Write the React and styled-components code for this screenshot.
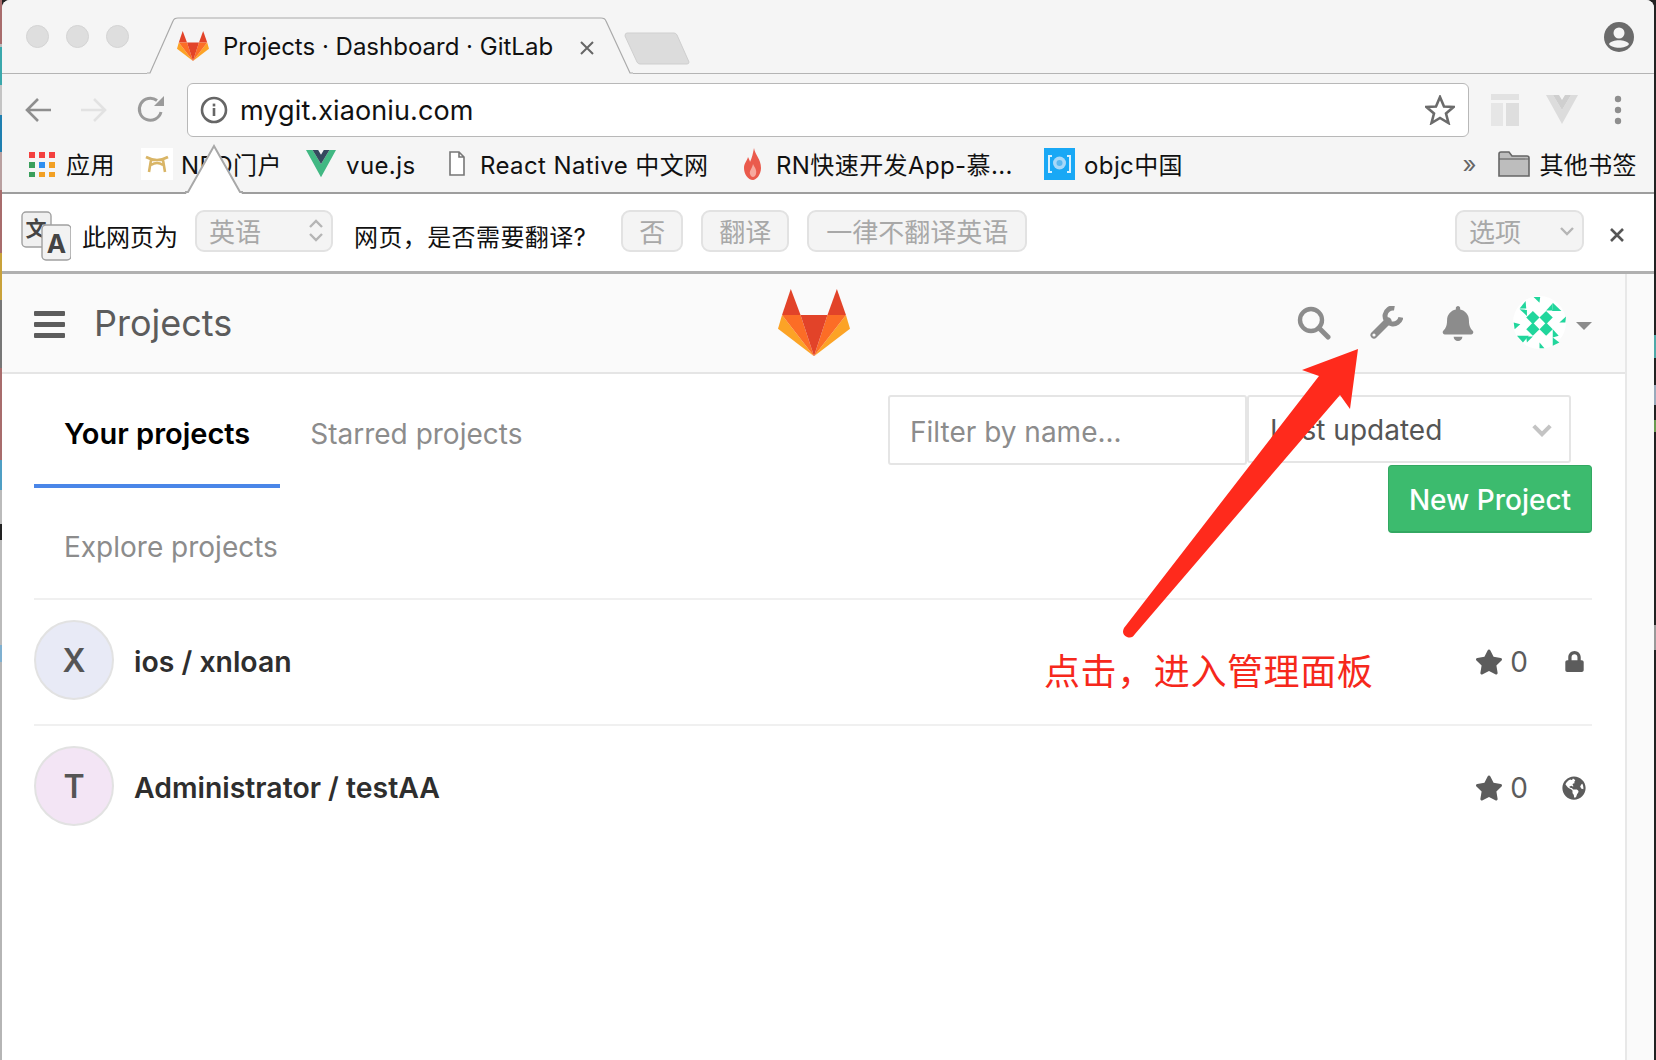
import React from "react";
import styled, { createGlobalStyle } from "styled-components";
import { FaStar, FaLock, FaGlobeAmericas, FaBell } from "react-icons/fa";

const GlobalStyle = createGlobalStyle`
  html, body {
    margin: 0;
    padding: 0;
    background: #fff;
  }
  * {
    box-sizing: border-box;
  }
`;

const FONT = `Inter, "Noto Sans CJK SC", sans-serif`;

const Page = styled.div`
  position: relative;
  display: flex;
  width: 1656px;
  height: 1060px;
  overflow: hidden;
  font-family: ${FONT};
  background: #222;
`;

const LeftEdge = styled.div`
  width: 2px;
  flex: none;
  background: linear-gradient(
    to bottom,
    #a86c6c 0 44px, #bbb 44px 47px, #3aa8ac 47px 85px, #c4c4c4 85px 115px,
    #1f7fb0 115px 152px, #b9a0a0 152px 190px, #a86c6c 190px 253px, #c9a23a 253px 300px,
    #777 300px 368px, #a86c6c 368px 460px, #4f9fc4 460px 490px, #bbb 490px 524px,
    #222 524px 540px, #bbb 540px 645px, #7fb0d0 645px 662px, #b5b5b5 662px
  );
`;

const RightEdge = styled.div`
  width: 2px;
  flex: none;
  background: linear-gradient(
    to bottom,
    #222 0 335px, #4fa8a8 335px 358px, #222 358px 385px, #9ab 385px 405px,
    #222 405px 420px, #6a9a50 420px 432px, #222 432px 625px, #999 625px 650px, #222 650px
  );
`;

const Window = styled.div`
  width: 1652px;
  flex: none;
  display: flex;
  flex-direction: column;
  background: #fff;
  border-radius: 8px 8px 0 0;
  overflow: hidden;
`;

const TabStrip = styled.div`
  display: flex;
  height: 74px;
  flex: none;
  padding-left: 24px;
  background: #f5f5f5;
  border-bottom: 1px solid #b4b4b4;
`;

const Lights = styled.div`
  display: flex;
  gap: 17px;
  padding-top: 25px;
  width: 121px;
`;

const Light = styled.span`
  width: 23px;
  height: 23px;
  border-radius: 50%;
  background: #dedede;
  border: 1px solid #d4d4d4;
`;

const Tab = styled.div`
  position: relative;
  display: flex;
  align-items: center;
  width: 486px;
  height: 57px;
  margin-top: 17px;
  padding: 1px 0 0 30px;
  gap: 14px;
`;

const TabShape = styled.svg`
  position: absolute;
  inset: 0;
`;

const TabTitle = styled.span`
  position: relative;
  font-size: 24px;
  color: #111;
  white-space: nowrap;
  width: 344px;
`;

const TabClose = styled.svg`
  position: relative;
  margin-left: -2px;
  margin-top: 3px;
`;

const NewTab = styled.svg`
  margin: 32px 0 0 -9px;
`;

const AccountIcon = styled.svg`
  margin: 21px 19px 0 auto;
`;

const Toolbar = styled.div`
  display: flex;
  align-items: center;
  height: 64px;
  flex: none;
  padding: 8px 0 0 23px;
  background: #f5f5f5;
`;

const NavIcon = styled.svg`
  flex: none;
  margin-right: ${(p) => p.$mr || 0}px;
`;

const Omnibox = styled.div`
  display: flex;
  align-items: center;
  width: 1282px;
  height: 54px;
  margin-right: 22px;
  padding: 0 13px 0 12px;
  gap: 12px;
  background: #fff;
  border: 1px solid #b8b8b8;
  border-radius: 6px;
  flex: none;
`;

const Url = styled.span`
  flex: 1;
  font-size: 27px;
  color: #111;
  letter-spacing: 0.1px;
`;

const Bookmarks = styled.div`
  position: relative;
  display: flex;
  align-items: center;
  height: 56px;
  flex: none;
  padding: 0 17px 2px 26px;
  background: #f5f5f5;
  border-bottom: 2px solid #9e9e9e;
`;

const Bookmark = styled.div`
  display: flex;
  align-items: center;
  gap: ${(p) => p.$gap || 10}px;
  width: ${(p) => (p.$w ? `${p.$w}px` : "auto")};
  flex: none;
  font-size: 24px;
  line-height: 34px;
  letter-spacing: 0.4px;
  color: #111;
  white-space: nowrap;
`;

const BookmarkLabel = styled.span`
  padding-top: 3px;
`;

const Chevrons = styled.span`
  margin-left: auto;
  margin-right: 22px;
  font-size: 24px;
  color: #666;
`;

const Notch = styled.svg`
  position: absolute;
  left: 183px;
  bottom: -2px;
`;

const InfoBar = styled.div`
  display: flex;
  align-items: center;
  height: 80px;
  flex: none;
  padding: 0 29px 4px 19px;
  background: #fff;
  border-bottom: 3px solid #b0b0b0;
`;

const InfoText = styled.span`
  font-size: 24px;
  letter-spacing: ${(p) => p.$ls || 0}px;
  color: #111;
  white-space: nowrap;
  margin: ${(p) => p.$m};
  padding-top: 10px;
`;

const Disabled = styled.div`
  display: flex;
  align-items: center;
  justify-content: ${(p) => (p.$between ? "space-between" : "center")};
  width: ${(p) => p.$w}px;
  height: 42px;
  margin: ${(p) => p.$m || 0};
  padding: ${(p) => (p.$between ? "0 7px 0 12px" : 0)};
  font-size: 26px;
  color: #a8a8a8;
  background: #f4f4f4;
  border: 2px solid #e2e2e2;
  border-radius: 9px;
  flex: none;
`;

const Content = styled.div`
  display: flex;
  flex: 1;
  min-height: 0;
`;

const Main = styled.div`
  width: 1623px;
  flex: none;
`;

const Gutter = styled.div`
  flex: 1;
  background: #fafafa;
  border-left: 2px solid #e8e8e8;
`;

const Header = styled.header`
  display: grid;
  grid-template-columns: 1fr auto 1fr;
  align-items: center;
  height: 100px;
  padding: 0 33px 0 32px;
  background: #fafafa;
  border-bottom: 2px solid #e5e5e5;
`;

const HeaderLeft = styled.div`
  display: flex;
  align-items: center;
  gap: 29px;
`;

const LogoSlot = styled.div`
  margin-left: 2px;
`;

const Burger = styled.div`
  display: flex;
  flex-direction: column;
  gap: 6px;
  width: 31px;
  margin-top: 2px;
  span {
    height: 5px;
    border-radius: 1px;
    background: #5c5c5c;
  }
`;

const HeaderTitle = styled.h1`
  margin: 0;
  font-size: 36px;
  font-weight: 400;
  color: #5c5c5c;
`;

const HeaderRight = styled.div`
  display: flex;
  align-items: center;
  justify-content: flex-end;
  color: #8c8c8c;
`;

const HeaderIcon = styled.div`
  display: flex;
  justify-content: center;
  width: 34px;
  margin-right: ${(p) => p.$mr}px;
`;

const IdenticonSlot = styled.div`
  margin-top: -2px;
`;

const Caret = styled.span`
  width: 0;
  height: 0;
  margin: 6px 0 0 10px;
  border-left: 8px solid transparent;
  border-right: 8px solid transparent;
  border-top: 8px solid #8c8c8c;
`;

const TopBar = styled.div`
  display: flex;
  justify-content: space-between;
  height: 226px;
  margin: 0 33px 0 32px;
  border-bottom: 2px solid #f0f0f0;
`;

const TabLinks = styled.div`
  display: flex;
  flex-wrap: wrap;
  align-content: flex-start;
  width: 520px;
`;

const TabLink = styled.div`
  height: ${(p) => p.$h}px;
  padding: ${(p) => p.$pt}px 30px 0;
  font-size: ${(p) => (p.$active ? 29 : 28)}px;
  line-height: 34px;
  font-weight: ${(p) => (p.$active ? 600 : 400)};
  color: ${(p) => (p.$active ? "#000" : "#8c8c8c")};
  border-bottom: ${(p) => (p.$active ? "4px solid #4a86e8" : "none")};
  white-space: nowrap;
`;

const Controls = styled.div`
  display: flex;
  flex-direction: column;
  align-items: flex-end;
  padding-top: 21px;
`;

const FilterRow = styled.div`
  display: flex;
  align-items: flex-start;
  margin-right: 21px;
`;

const FilterInput = styled.div`
  width: 359px;
  height: 70px;
  padding: 0 20px;
  line-height: 71px;
  font-size: 28px;
  color: #8c8c8c;
  background: #fff;
  border: 2px solid #e5e5e5;
  border-radius: 3px;
`;

const SortSelect = styled.div`
  display: flex;
  align-items: center;
  justify-content: space-between;
  width: 324px;
  height: 68px;
  padding: 2px 16px 0 21px;
  font-size: 28px;
  color: #555;
  background: #fff;
  border: 2px solid #e5e5e5;
  border-radius: 3px;
`;

const NewProject = styled.button`
  width: 204px;
  height: 68px;
  padding: 2px 0 0;
  font-family: inherit;
  font-size: 28px;
  font-weight: 500;
  color: #fff;
  background: #3cbb6e;
  border: 1px solid #33a862;
  border-bottom-width: 2px;
  border-radius: 4px;
`;

const Rows = styled.div`
  margin: 0 33px 0 32px;
`;

const Row = styled.div`
  display: flex;
  align-items: center;
  gap: 20px;
  padding: 20px 0 ${(p) => (p.$last ? 20 : 24)}px;
  border-bottom: ${(p) => (p.$last ? "none" : "2px solid #f0f0f0")};
`;

const Avatar = styled.div`
  display: flex;
  align-items: center;
  justify-content: center;
  width: 80px;
  height: 80px;
  flex: none;
  font-size: 32px;
  font-weight: 600;
  color: #555;
  background: ${(p) => p.$bg};
  border: 2px solid #e2e2e2;
  border-radius: 50%;
`;

const RowTitle = styled.div`
  flex: 1;
  padding-top: 3px;
  font-size: 28.4px;
  font-weight: 600;
  color: #2e2e2e;
`;

const Stats = styled.div`
  display: flex;
  align-items: center;
  padding-top: 3px;
  color: #5c5c5c;
  font-size: 28px;
`;

const Count = styled.span`
  margin: 0 31px 0 7px;
`;

const Visibility = styled.div`
  display: flex;
  justify-content: center;
  width: 30px;
  margin-right: 3px;
`;

const Arrow = styled.svg`
  position: absolute;
  left: 0;
  top: 0;
  pointer-events: none;
`;

const Note = styled.div`
  position: absolute;
  left: 1044px;
  top: 646px;
  font-size: 36px;
  line-height: 52px;
  letter-spacing: 0.6px;
  color: #f6281c;
  white-space: nowrap;
`;

// fox head, points measured off the reference logo
const Logo = ({ width }) => (
  <svg width={width} viewBox="0 0 214 200" style={{ display: "block", position: "relative" }}>
    <polygon points="38,0 12,77 67,77" fill="#e24329" />
    <polygon points="175,0 147,77 202,77" fill="#e24329" />
    <polygon points="12,77 0,118 107,200" fill="#fca326" />
    <polygon points="202,77 214,118 107,200" fill="#fca326" />
    <polygon points="12,77 67,77 107,200" fill="#fc6d26" />
    <polygon points="202,77 147,77 107,200" fill="#fc6d26" />
    <polygon points="67,77 147,77 107,200" fill="#e24329" />
  </svg>
);

const VueLogo = ({ size, light }) => (
  <svg width={size} height={size} viewBox="0 0 32 30" style={{ flex: "none" }}>
    <polygon points="0,0 16,29 32,0 25,0 16,15 7,0" fill={light ? "#dcdcdc" : "#41b883"} />
    <polygon points="7,0 16,15 25,0 19,0 16,5 13,0" fill={light ? "#cfcfcf" : "#35495e"} />
  </svg>
);

const Identicon = () => (
  <svg width="53" height="53" viewBox="0 0 160 160" style={{ display: "block" }}>
    <circle cx="80" cy="80" r="80" fill="#fff" />
    <g fill="#21d69c">
      <polygon points="60,45 80,65 60,85 40,65" />
      <polygon points="100,45 120,65 100,85 80,65" />
      <polygon points="60,80 80,100 60,120 40,100" />
      <polygon points="100,80 120,100 100,120 80,100" />
      <polygon points="62,3 82,3 80,20" />
      <polygon points="20,38 38,15 40,38" />
      <polygon points="20,40 42,42 42,60" />
      <polygon points="120,20 146,45 118,45" />
      <polygon points="120,22 100,44 118,44" />
      <polygon points="160,62 140,80 158,80" />
      <polygon points="2,80 22,85 5,100" />
      <polygon points="12,120 48,120 30,140" />
      <polygon points="60,122 40,122 42,140" />
      <polygon points="120,100 138,120 120,125" />
      <polygon points="120,125 140,140 120,150" />
      <polygon points="80,140 95,158 80,158" />
    </g>
  </svg>
);

const bookmarks = [
  {
    w: 113,
    label: "应用",
    icon: (
      <svg width="28" height="26" viewBox="0 0 28 26">
        {[
          ["#f4403f", "#f4403f", "#f4403f"],
          ["#3a9f5c", "#2f8ff0", "#f2a024"],
          ["#3a9f5c", "#f2a024", "#f2a024"],
        ].map((row, y) =>
          row.map((c, x) => <rect key={`${x}-${y}`} x={1 + x * 10} y={1 + y * 10} width="6" height="6" fill={c} />)
        )}
      </svg>
    ),
  },
  {
    w: 165,
    gap: 8,
    label: "NEO门户",
    icon: (
      <svg width="32" height="32" viewBox="0 0 32 32">
        <rect width="32" height="32" fill="#fff" />
        <path d="M5 9 Q16 15 27 9 M10 12 L8 24 M22 12 L24 24 M10 17 Q16 13 22 17" stroke="#d9b566" strokeWidth="2.6" fill="none" />
      </svg>
    ),
  },
  { w: 142, gap: 10, label: "vue.js", icon: <VueLogo size={30} /> },
  {
    w: 294,
    gap: 14,
    label: "React Native 中文网",
    icon: (
      <svg width="18" height="26" viewBox="0 0 18 26">
        <path d="M2 1 H11 L16 6 V24 H2 Z M11 1 V6 H16" fill="#fff" stroke="#777" strokeWidth="1.6" />
      </svg>
    ),
  },
  {
    w: 302,
    gap: 13,
    label: "RN快速开发App-慕...",
    icon: (
      <svg width="21" height="32" viewBox="0 0 21 32">
        <path d="M12 0 C13 7 19 11 19 20 C19 27 14 32 11 32 C6 32 2 26 2 20 C2 15 5 13 6 9 C7 11 8 13 8 14 C10 10 11 5 12 0 Z" fill="#ea5a4c" />
        <path d="M11 16 C13 20 15 22 14 26 C13 30 9 30 8 26 C7 23 10 21 11 16 Z" fill="#f7a99e" />
      </svg>
    ),
  },
  {
    gap: 9,
    label: "objc中国",
    icon: (
      <svg width="31" height="32" viewBox="0 0 31 32">
        <rect width="31" height="32" fill="#19a8f5" />
        <path d="M8 8 H5 V24 H8 M23 8 H26 V24 H23" stroke="#d8f0ff" strokeWidth="2" fill="none" />
        <circle cx="15.5" cy="15" r="6.5" fill="#a8d8f8" />
        <circle cx="15.5" cy="15" r="3" fill="#5cb8f0" />
      </svg>
    ),
  },
];

const Chevron = ({ up, color = "#b5b5b5", wide }) => (
  <svg
    width={wide ? 22 : 16}
    height={wide ? 14 : 10}
    viewBox="0 0 16 10"
    style={{ display: "block", margin: "3px 0" }}
  >
    <path d={up ? "M2 8 L8 2 L14 8" : "M2 2 L8 8 L14 2"} stroke={color} strokeWidth={wide ? 3 : 2.4} fill="none" />
  </svg>
);

const projects = [
  { letter: "X", bg: "#e8eaf6", name: "ios / xnloan", icon: <FaLock size={21} /> },
  { letter: "T", bg: "#f3e5f5", name: "Administrator / testAA", icon: <FaGlobeAmericas size={24} />, last: true },
];

export default function App() {
  return (
    <Page>
      <GlobalStyle />
      <LeftEdge />
      <Window>
        <TabStrip>
          <Lights>
            <Light />
            <Light />
            <Light />
          </Lights>
          <Tab>
            <TabShape width="486" height="57" viewBox="0 0 486 57">
              <path d="M0 56 H3 L26 4 Q27 1 31 1 H454 Q458 1 459 4 L483 56 H486 V57 H0 Z" fill="#f5f5f5" />
              <path d="M0 56 H3 L26 4 Q27 1 31 1 H454 Q458 1 459 4 L483 56 H486" fill="none" stroke="#aaa" strokeWidth="1.2" />
            </TabShape>
            <Logo width={32} />
            <TabTitle>Projects · Dashboard · GitLab</TabTitle>
            <TabClose width="16" height="16" viewBox="0 0 16 16">
              <path d="M2 2 L14 14 M14 2 L2 14" stroke="#666" strokeWidth="2" />
            </TabClose>
          </Tab>
          <NewTab width="66" height="33" viewBox="0 0 66 33">
            <path d="M3 1 H50 Q52 1 53 3 L65 30 Q65 32 63 32 H16 Q14 32 13 30 L1 4 Q1 1 3 1 Z" fill="#dcdcdc" stroke="#cfcfcf" />
          </NewTab>
          <AccountIcon width="32" height="32" viewBox="0 0 32 32">
            <circle cx="16" cy="16" r="15" fill="#6b6b6b" />
            <circle cx="16" cy="12" r="5.5" fill="#f5f5f5" />
            <path d="M6 23 C9 18 23 18 26 23 C23 28 9 28 6 23 Z" fill="#f5f5f5" />
          </AccountIcon>
        </TabStrip>
        <Toolbar>
          <NavIcon $mr={30} width="26" height="26" viewBox="0 0 26 26">
            <path d="M13 2 L2 13 L13 24 M2 13 H26" stroke="#8e8e8e" strokeWidth="2.6" fill="none" />
          </NavIcon>
          <NavIcon $mr={29} width="26" height="26" viewBox="0 0 26 26">
            <path d="M13 2 L24 13 L13 24 M24 13 H0" stroke="#e2e2e2" strokeWidth="2.6" fill="none" />
          </NavIcon>
          <NavIcon $mr={21} width="30" height="30" viewBox="0 0 30 30">
            <path d="M25 17 A11 11 0 1 1 21 5.5" stroke="#9a9a9a" strokeWidth="3" fill="none" />
            <polygon points="18,11 28,11 28,1" fill="#9a9a9a" />
          </NavIcon>
          <Omnibox>
            <svg width="28" height="28" viewBox="0 0 28 28" style={{ flex: "none" }}>
              <circle cx="14" cy="14" r="12" fill="none" stroke="#666" strokeWidth="2.6" />
              <rect x="12.7" y="12" width="2.6" height="8" fill="#666" />
              <rect x="12.7" y="7.6" width="2.6" height="2.8" fill="#666" />
            </svg>
            <Url>mygit.xiaoniu.com</Url>
            <svg width="30" height="30" viewBox="0 0 30 30">
              <polygon points="15,2 19,11.5 28.5,12 21,18.5 23.5,28 15,23 6.5,28 9,18.5 1.5,12 11,11.5" fill="none" stroke="#6b6b6b" strokeWidth="2.6" />
            </svg>
          </Omnibox>
          <NavIcon $mr={27} width="28" height="32" viewBox="0 0 28 32">
            <rect x="0" y="0" width="28" height="6" fill="#e2e2e2" />
            <rect x="0" y="9" width="12" height="23" fill="#e6e6e6" />
            <rect x="15" y="9" width="13" height="23" fill="#dedede" />
          </NavIcon>
          <VueLogo size={32} light />
          <NavIcon $mr={0} width="8" height="30" viewBox="0 0 8 30" style={{ marginLeft: 36 }}>
            <circle cx="4" cy="4" r="3.2" fill="#8e8e8e" />
            <circle cx="4" cy="15" r="3.2" fill="#8e8e8e" />
            <circle cx="4" cy="26" r="3.2" fill="#8e8e8e" />
          </NavIcon>
        </Toolbar>
        <Bookmarks>
          {bookmarks.map((b) => (
            <Bookmark key={b.label} $w={b.w} $gap={b.gap}>
              {b.icon}
              <BookmarkLabel>{b.label}</BookmarkLabel>
            </Bookmark>
          ))}
          <Chevrons>»</Chevrons>
          <Bookmark $gap={9}>
            <svg width="32" height="26" viewBox="0 0 32 26">
              <path d="M1 3 Q1 1 3 1 H11 L14 5 H29 Q31 5 31 7 V25 H1 Z" fill="#bdbdbd" stroke="#666" strokeWidth="1.6" />
              <path d="M1 8 H31" stroke="#666" strokeWidth="1.2" />
            </svg>
            <BookmarkLabel>其他书签</BookmarkLabel>
          </Bookmark>
          <Notch width="58" height="50" viewBox="0 0 58 50">
            <polygon points="1,50 29,1 57,50" fill="#fff" />
            <path d="M0 48 H3 L29 2 L55 48 H58" fill="none" stroke="#a8a8a8" strokeWidth="2" />
          </Notch>
        </Bookmarks>
        <InfoBar>
          <svg width="50" height="50" viewBox="0 0 50 50" style={{ flex: "none", marginTop: 10 }}>
            <rect x="1" y="1" width="29" height="35" rx="4" fill="#f0f0f0" stroke="#a0a0a0" strokeWidth="1.4" />
            <text x="15" y="25" textAnchor="middle" fontSize="21" fontWeight="700" fill="#444" fontFamily="Noto Sans CJK SC">文</text>
            <rect x="21" y="14" width="29" height="35" rx="4" fill="#f2f2f2" stroke="#a0a0a0" strokeWidth="1.4" />
            <text x="35.5" y="42" textAnchor="middle" fontSize="26" fontWeight="700" fill="#444" fontFamily="Inter">A</text>
          </svg>
          <InfoText $m="0 17px 0 11px">此网页为</InfoText>
          <Disabled $w={138} $between>
            英语
            <span>
              <Chevron up />
              <Chevron />
            </span>
          </Disabled>
          <InfoText $m="0 35px 0 21px" $ls={0.4}>网页，是否需要翻译?</InfoText>
          <Disabled $w={62}>否</Disabled>
          <Disabled $w={88} $m="0 18px">翻译</Disabled>
          <Disabled $w={220}>一律不翻译英语</Disabled>
          <Disabled $w={129} $between $m="0 25px 0 auto">
            选项
            <Chevron />
          </Disabled>
          <svg width="16" height="16" viewBox="0 0 16 16" style={{ marginTop: 8 }}>
            <path d="M2 2 L14 14 M14 2 L2 14" stroke="#555" strokeWidth="2.6" />
          </svg>
        </InfoBar>
        <Content>
          <Main>
            <Header>
              <HeaderLeft>
                <Burger>
                  <span />
                  <span />
                  <span />
                </Burger>
                <HeaderTitle>Projects</HeaderTitle>
              </HeaderLeft>
              <LogoSlot>
                <Logo width={72} />
              </LogoSlot>
              <HeaderRight>
                <HeaderIcon $mr={38}>
                  <svg width="34" height="34" viewBox="0 0 34 34">
                    <circle cx="14" cy="14" r="11" fill="none" stroke="#8c8c8c" strokeWidth="4.4" />
                    <path d="M22 22 L31 31" stroke="#8c8c8c" strokeWidth="5" strokeLinecap="round" />
                  </svg>
                </HeaderIcon>
                <HeaderIcon $mr={38}>
                  <svg width="34" height="34" viewBox="0 0 34 34">
                    <path d="M25.4 2.1 A8 8 0 1 0 31.9 11.4" fill="none" stroke="#8c8c8c" strokeWidth="5" />
                    <path d="M19 15 L5 29" stroke="#8c8c8c" strokeWidth="7" strokeLinecap="round" />
                    <circle cx="5" cy="29" r="1.6" fill="#fafafa" />
                  </svg>
                </HeaderIcon>
                <HeaderIcon $mr={38}>
                  <FaBell size={35} />
                </HeaderIcon>
                <IdenticonSlot>
                  <Identicon />
                </IdenticonSlot>
                <Caret />
              </HeaderRight>
            </Header>
            <TopBar>
              <TabLinks>
                <TabLink $active $h={114} $pt={43}>Your projects</TabLink>
                <TabLink $h={114} $pt={43}>Starred projects</TabLink>
                <TabLink $h={110} $pt={42}>Explore projects</TabLink>
              </TabLinks>
              <Controls>
                <FilterRow>
                  <FilterInput>Filter by name...</FilterInput>
                  <SortSelect>
                    Last updated
                    <Chevron color="#c4c4c4" wide />
                  </SortSelect>
                </FilterRow>
                <NewProject>New Project</NewProject>
              </Controls>
            </TopBar>
            <Rows>
              {projects.map((p) => (
                <Row key={p.name} $last={p.last}>
                  <Avatar $bg={p.bg}>{p.letter}</Avatar>
                  <RowTitle>{p.name}</RowTitle>
                  <Stats>
                    <FaStar size={28} />
                    <Count>0</Count>
                    <Visibility>{p.icon}</Visibility>
                  </Stats>
                </Row>
              ))}
            </Rows>
          </Main>
          <Gutter />
        </Content>
      </Window>
      <RightEdge />
      <Arrow width="1656" height="1060" viewBox="0 0 1656 1060">
        <path
          d="M1358 349 L1302 370 L1319 376 L1124 628 Q1121 634 1127 637 Q1132 639 1135 634 L1340 395 L1350 409 Z"
          fill="#ff2a1c"
        />
      </Arrow>
      <Note>点击，进入管理面板</Note>
    </Page>
  );
}
